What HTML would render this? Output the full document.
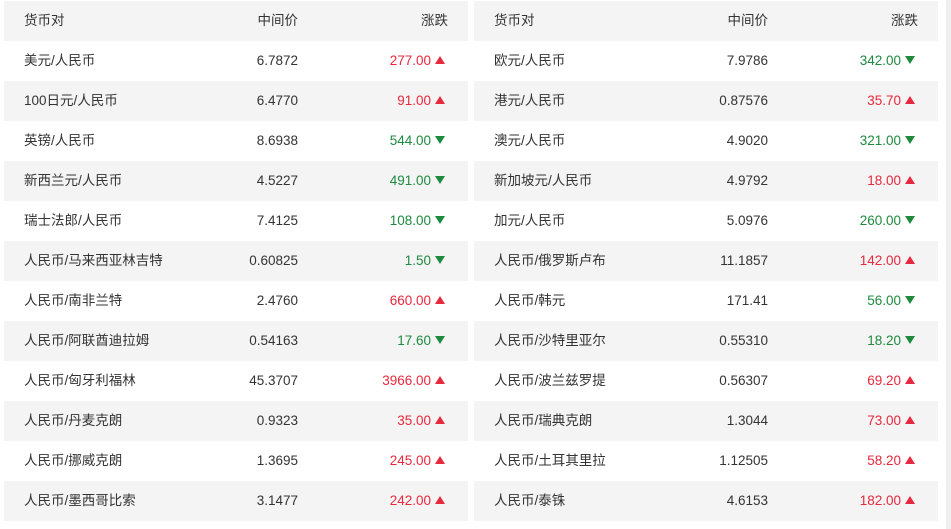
<!DOCTYPE html>
<html><head><meta charset="utf-8"><style>
body{margin:0;width:951px;height:529px;background:#fff;overflow:hidden;font-family:"Liberation Sans","Noto Sans CJK SC",sans-serif;font-size:13.5px;color:#333;position:relative}
.t{position:absolute;top:1px;width:464px}
.r{height:40px;line-height:40px;position:relative}
.r:nth-child(odd){background:#f4f4f4}
.n{position:absolute;left:20px}
.p{position:absolute;right:170px}
.c{position:absolute;right:37px}
.h .c{right:20px}
.up{color:#e8283c}.dn{color:#1e8a3e}
.tri{display:inline-block;width:0;height:0;border-left:5px solid transparent;border-right:5px solid transparent;margin-left:4px;vertical-align:1px}
.up .tri{border-bottom:8px solid #e8283c}
.dn .tri{border-top:8px solid #1e8a3e}
.c{margin-right:-14px}
.sb{position:absolute;right:0;top:0;width:5px;height:529px;background:#f0f0f0}
</style></head><body>
<div class="t" style="left:4px">
<div class="r h"><span class="n">货币对</span><span class="p">中间价</span><span class="c" style="margin-right:0">涨跌</span></div>
<div class="r"><span class="n">美元/人民币</span><span class="p">6.7872</span><span class="c up">277.00<i class="tri"></i></span></div>
<div class="r"><span class="n">100日元/人民币</span><span class="p">6.4770</span><span class="c up">91.00<i class="tri"></i></span></div>
<div class="r"><span class="n">英镑/人民币</span><span class="p">8.6938</span><span class="c dn">544.00<i class="tri"></i></span></div>
<div class="r"><span class="n">新西兰元/人民币</span><span class="p">4.5227</span><span class="c dn">491.00<i class="tri"></i></span></div>
<div class="r"><span class="n">瑞士法郎/人民币</span><span class="p">7.4125</span><span class="c dn">108.00<i class="tri"></i></span></div>
<div class="r"><span class="n">人民币/马来西亚林吉特</span><span class="p">0.60825</span><span class="c dn">1.50<i class="tri"></i></span></div>
<div class="r"><span class="n">人民币/南非兰特</span><span class="p">2.4760</span><span class="c up">660.00<i class="tri"></i></span></div>
<div class="r"><span class="n">人民币/阿联酋迪拉姆</span><span class="p">0.54163</span><span class="c dn">17.60<i class="tri"></i></span></div>
<div class="r"><span class="n">人民币/匈牙利福林</span><span class="p">45.3707</span><span class="c up">3966.00<i class="tri"></i></span></div>
<div class="r"><span class="n">人民币/丹麦克朗</span><span class="p">0.9323</span><span class="c up">35.00<i class="tri"></i></span></div>
<div class="r"><span class="n">人民币/挪威克朗</span><span class="p">1.3695</span><span class="c up">245.00<i class="tri"></i></span></div>
<div class="r"><span class="n">人民币/墨西哥比索</span><span class="p">3.1477</span><span class="c up">242.00<i class="tri"></i></span></div>
</div>
<div class="t" style="left:474px">
<div class="r h"><span class="n">货币对</span><span class="p">中间价</span><span class="c" style="margin-right:0">涨跌</span></div>
<div class="r"><span class="n">欧元/人民币</span><span class="p">7.9786</span><span class="c dn">342.00<i class="tri"></i></span></div>
<div class="r"><span class="n">港元/人民币</span><span class="p">0.87576</span><span class="c up">35.70<i class="tri"></i></span></div>
<div class="r"><span class="n">澳元/人民币</span><span class="p">4.9020</span><span class="c dn">321.00<i class="tri"></i></span></div>
<div class="r"><span class="n">新加坡元/人民币</span><span class="p">4.9792</span><span class="c up">18.00<i class="tri"></i></span></div>
<div class="r"><span class="n">加元/人民币</span><span class="p">5.0976</span><span class="c dn">260.00<i class="tri"></i></span></div>
<div class="r"><span class="n">人民币/俄罗斯卢布</span><span class="p">11.1857</span><span class="c up">142.00<i class="tri"></i></span></div>
<div class="r"><span class="n">人民币/韩元</span><span class="p">171.41</span><span class="c dn">56.00<i class="tri"></i></span></div>
<div class="r"><span class="n">人民币/沙特里亚尔</span><span class="p">0.55310</span><span class="c dn">18.20<i class="tri"></i></span></div>
<div class="r"><span class="n">人民币/波兰兹罗提</span><span class="p">0.56307</span><span class="c up">69.20<i class="tri"></i></span></div>
<div class="r"><span class="n">人民币/瑞典克朗</span><span class="p">1.3044</span><span class="c up">73.00<i class="tri"></i></span></div>
<div class="r"><span class="n">人民币/土耳其里拉</span><span class="p">1.12505</span><span class="c up">58.20<i class="tri"></i></span></div>
<div class="r"><span class="n">人民币/泰铢</span><span class="p">4.6153</span><span class="c up">182.00<i class="tri"></i></span></div>
</div>
<div class="sb"></div>
</body></html>
